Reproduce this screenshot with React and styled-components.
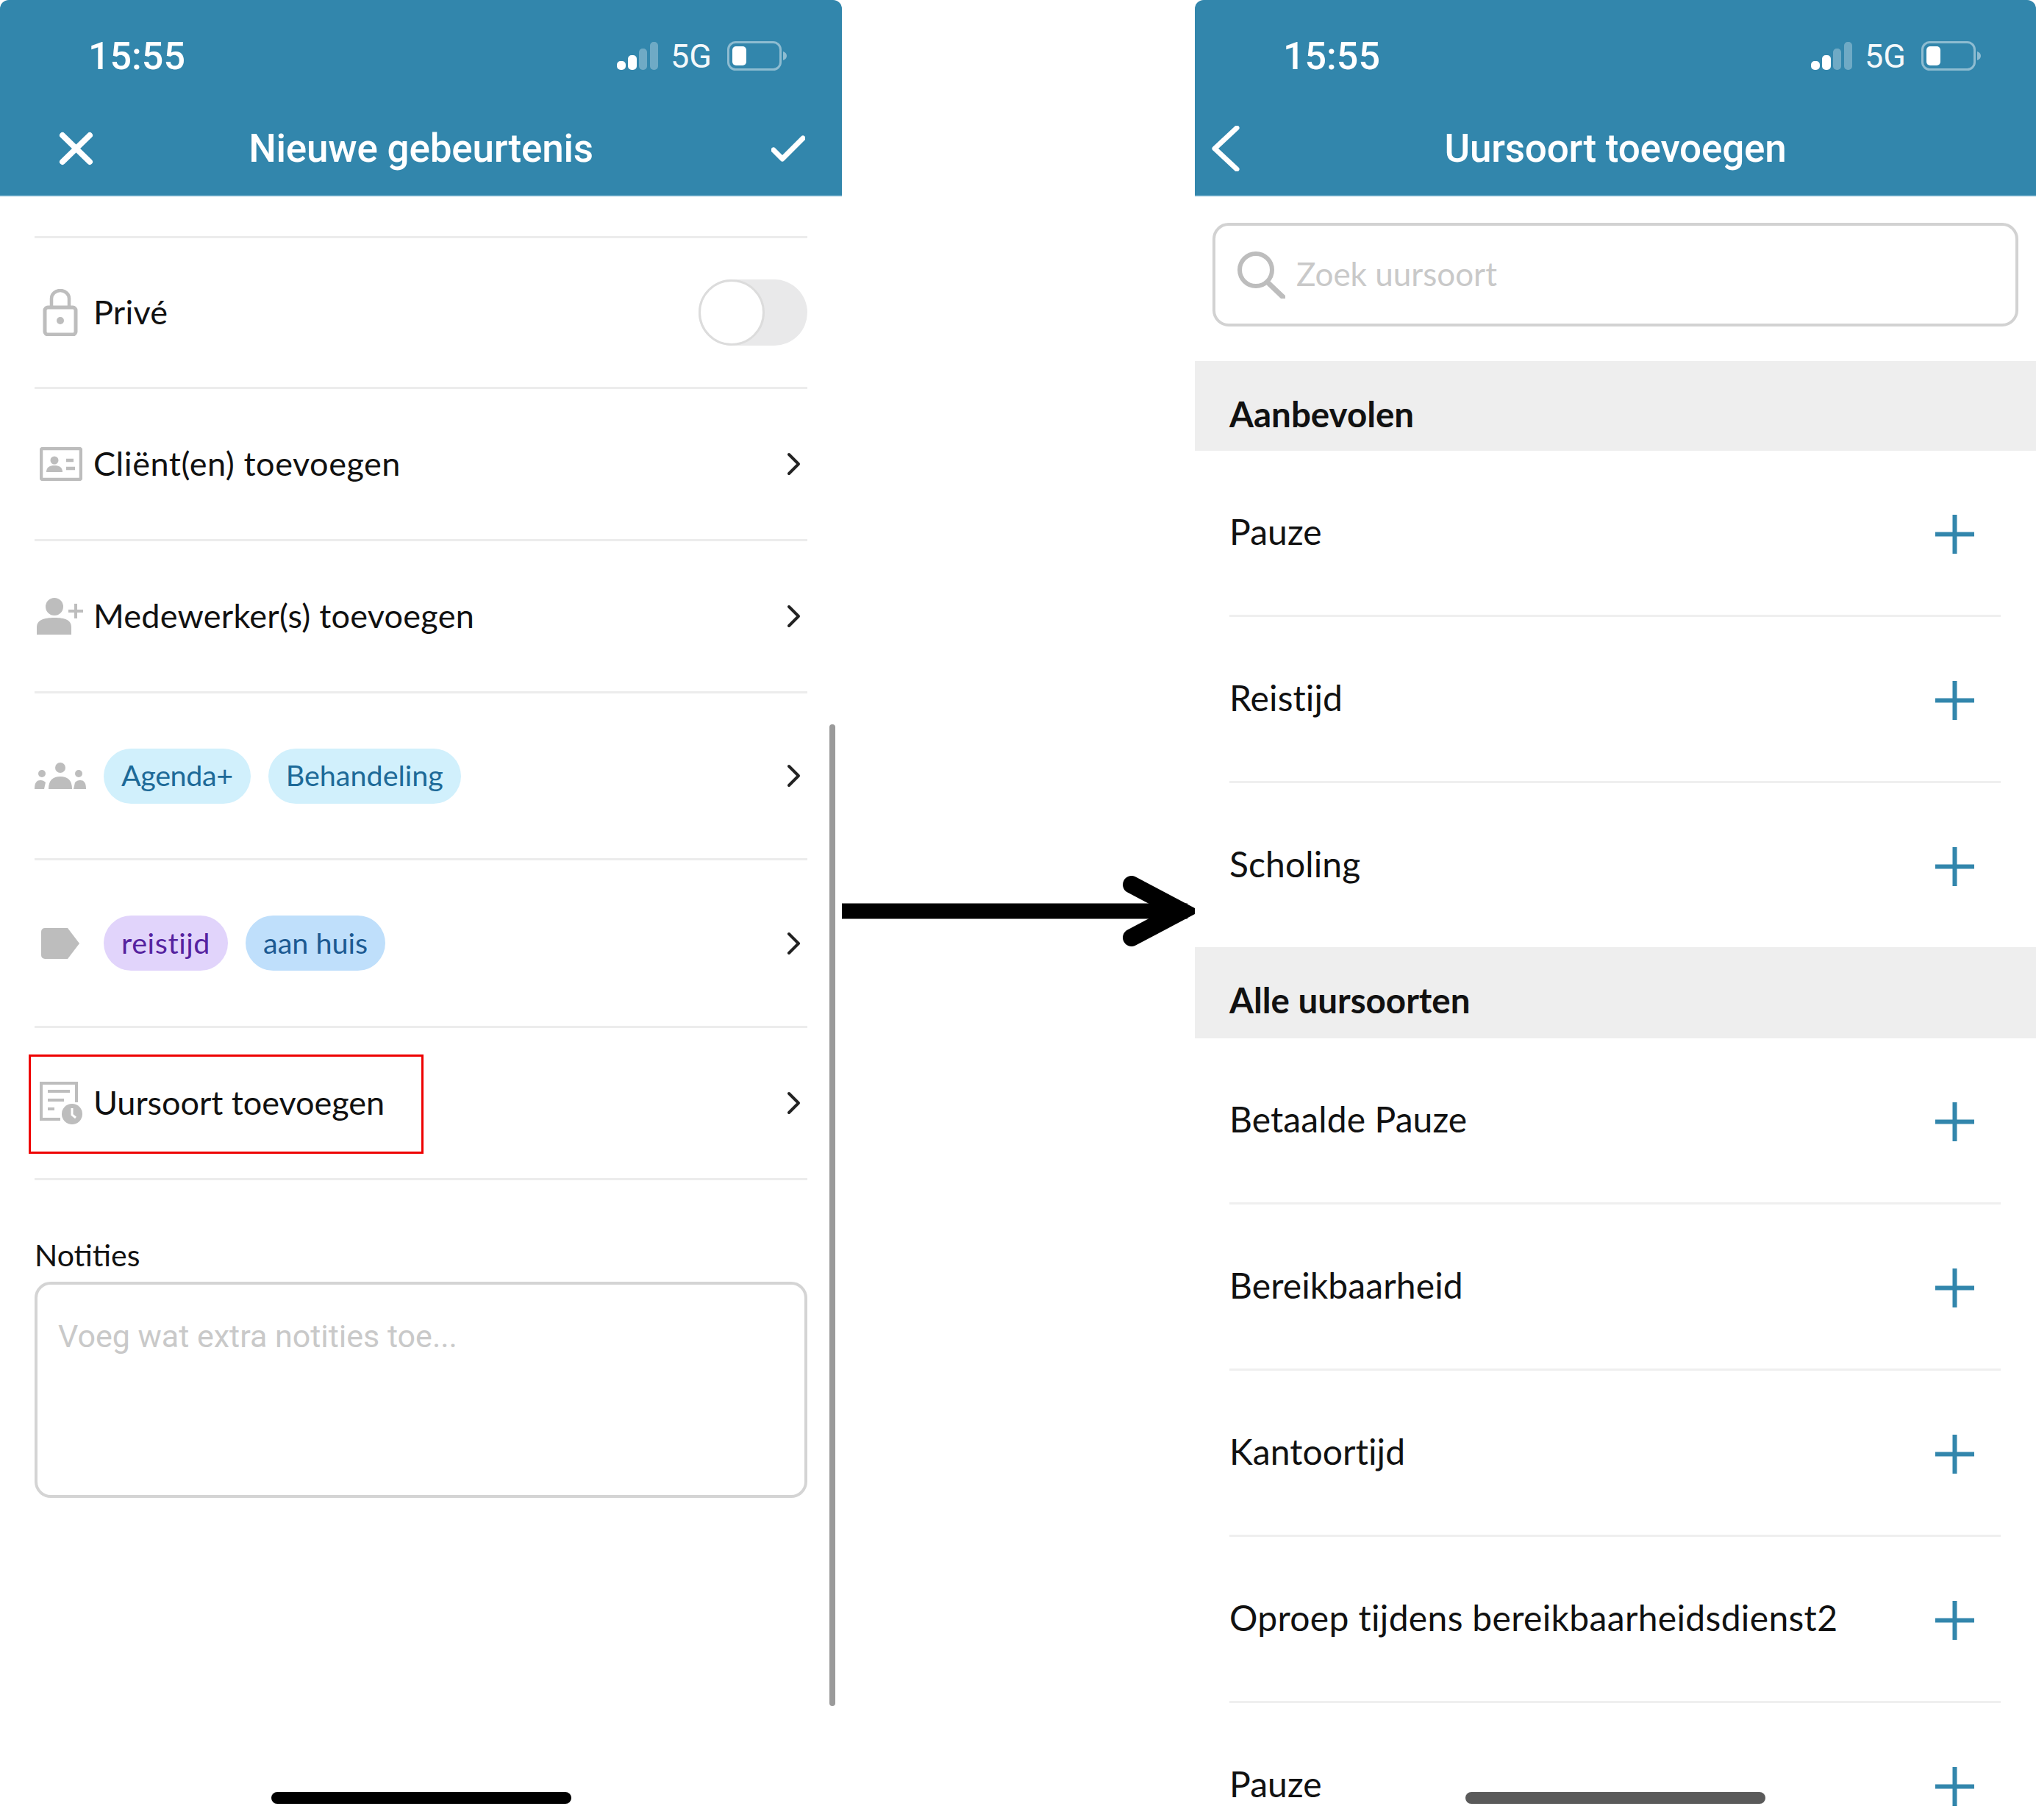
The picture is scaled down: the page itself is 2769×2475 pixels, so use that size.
import React from 'react';
import styled, { createGlobalStyle } from 'styled-components';

const BLUE = '#3286ac';
const ICON_GREY = '#bdbdbd';

const GlobalStyle = createGlobalStyle`
  html, body {
    margin: 0;
    padding: 0;
    background: #fff;
  }
  body {
    font-family: Lato, "Noto Sans", sans-serif;
  }
`;

const Page = styled.div`
  display: flex;
  width: 2769px;
  height: 2475px;
  overflow: hidden;
  background: #fff;
`;

const Phone = styled.section`
  position: relative;
  flex: none;
  width: ${(p) => p.$width}px;
  height: 2475px;
  overflow: hidden;
  background: #fff;
`;

const ArrowColumn = styled.div`
  flex: none;
  width: 480px;
  padding-top: 1191px;
  svg {
    display: block;
  }
`;

const Header = styled.header`
  background: ${BLUE};
  height: 267px;
  border-radius: 12px 12px 0 0;
  border-bottom: 2px solid #5fa3c2;
  box-sizing: border-box;
  color: #fff;
  font-family: Roboto, sans-serif;
`;

const StatusBar = styled.div`
  height: 152px;
  display: flex;
  align-items: center;
  padding: 0 75px 0 120px;
  box-sizing: border-box;
`;

const Time = styled.span`
  font-size: 52px;
  font-weight: 500;
  margin-right: auto;
`;

const Network = styled.span`
  font-size: 45px;
  margin: 0 21px 0 17px;
  opacity: 0.95;
`;

const Nav = styled.div`
  height: 113px;
  padding: 0 ${(p) => p.$side}px 13px;
  box-sizing: border-box;
  display: grid;
  grid-template-columns: 1fr auto 1fr;
  align-items: center;
  svg {
    display: block;
  }
`;

const NavTitle = styled.h1`
  margin: 0;
  font-size: 53px;
  font-weight: 500;
  letter-spacing: -0.2px;
`;

const NavStart = styled.div`
  display: flex;
  padding-left: ${(p) => p.$inset || 0}px;
`;

const NavEnd = styled.div`
  display: flex;
  justify-content: flex-end;
`;

const List = styled.div`
  margin: 54px 47px 0;
  border-top: 3px solid #ececec;
`;

const Row = styled.div`
  position: relative;
  height: ${(p) => p.$h}px;
  border-bottom: 3px solid #ececec;
  box-sizing: border-box;
  display: flex;
  align-items: center;
  padding-right: 8px;
`;

const IconSlot = styled.div`
  flex: none;
  width: ${(p) => p.$w || 80}px;
  box-sizing: border-box;
  padding-left: ${(p) => p.$inset || 0}px;
  display: flex;
  svg {
    display: block;
  }
`;

const RowLabel = styled.span`
  font-size: 45px;
  color: #111;
  letter-spacing: ${(p) => p.$track ?? 0.25}px;
  margin-bottom: 3px;
`;

const Chevron = styled.svg`
  margin-left: auto;
  flex: none;
`;

const Chip = styled.span`
  height: 75px;
  padding: 0 24px;
  border-radius: 38px;
  display: flex;
  align-items: center;
  margin-right: 24px;
  font-size: 39.5px;
  padding-bottom: 3px;
  box-sizing: border-box;
  letter-spacing: ${(p) => p.$track ?? 0}px;
  background: ${(p) => p.$bg};
  color: ${(p) => p.$fg};
`;

const RedBox = styled.div`
  position: absolute;
  left: -8px;
  top: 36px;
  width: 537px;
  height: 135px;
  border: 3px solid #ee0000;
  box-sizing: border-box;
`;

const Switch = styled.div`
  margin-left: auto;
  margin-right: -8px;
  width: 148px;
  height: 90px;
  border-radius: 45px;
  background: #e9e9ea;
  display: flex;
`;

const Knob = styled.div`
  width: 90px;
  height: 90px;
  border-radius: 50%;
  box-sizing: border-box;
  border: 3px solid #dcdcdc;
  background: #fff;
`;

const NotesBlock = styled.div`
  margin: 77px 47px 0;
`;

const NotesLabel = styled.div`
  font-size: 41px;
  color: #111;
  line-height: 50px;
  margin-bottom: 11px;
`;

const NotesBox = styled.div`
  height: 294px;
  border: 4px solid #d4d4d4;
  border-radius: 22px;
  box-sizing: border-box;
  padding: 45px 28px;
  font-family: Roboto, sans-serif;
  font-size: 43px;
  line-height: 50px;
  color: #c9c9c9;
`;

const Scrollbar = styled.div`
  position: absolute;
  left: 1128px;
  top: 985px;
  width: 8px;
  height: 1335px;
  border-radius: 4px;
  background: #9a9a9a;
`;

const HomeBar = styled.div`
  position: absolute;
  left: 50%;
  bottom: 22px;
  width: 408px;
  height: 16px;
  margin-left: -204px;
  border-radius: 8px;
  background: ${(p) => p.$color};
`;

const SearchBox = styled.div`
  margin: 36px 24px 47px;
  height: 141px;
  border: 4px solid #d2d2d2;
  border-radius: 22px;
  box-sizing: border-box;
  display: flex;
  align-items: center;
  padding-left: 29px;
  svg {
    display: block;
    flex: none;
  }
`;

const SearchText = styled.span`
  font-size: 44px;
  color: #c9c9c9;
  margin: 0 0 3px 15px;
`;

const SectionHead = styled.h2`
  margin: 0;
  height: ${(p) => p.$h}px;
  background: #eeeeee;
  box-sizing: border-box;
  padding: 46px 0 0 47px;
  font-size: 47.5px;
  line-height: 52px;
  font-weight: 700;
  color: #111;
`;

const Items = styled.div`
  margin-left: 47px;
  margin-right: 48px;
`;

const Item = styled.div`
  height: ${(p) => (p.$last ? 223 : 226)}px;
  box-sizing: border-box;
  border-bottom: ${(p) => (p.$last ? 'none' : '3px solid #efefef')};
  display: flex;
  align-items: center;
  justify-content: space-between;
  padding: 0 36px 2px 0;
`;

const ItemLabel = styled.span`
  font-size: 48px;
  color: #111;
  letter-spacing: ${(p) => p.$track ?? 0.1}px;
  margin-bottom: 3px;
`;

const PlusGlyph = styled.svg`
  margin-top: 6px;
  flex: none;
`;

const PlusIcon = () => (
  <PlusGlyph width="53" height="53" viewBox="0 0 53 53">
    <path d="M26.5 0v53M0 26.5h53" stroke={BLUE} strokeWidth="6" fill="none" />
  </PlusGlyph>
);

const ChevronRight = () => (
  <Chevron width="20" height="32" viewBox="0 0 20 32">
    <path d="M3 3l13 13L3 29" stroke="#222" strokeWidth="4" fill="none" strokeLinecap="round" strokeLinejoin="round" />
  </Chevron>
);

const Signal = () => (
  <svg width="56" height="38" viewBox="0 0 56 38">
    <rect x="0" y="26" width="12" height="12" rx="5" fill="#fff" />
    <rect x="15" y="18" width="12" height="20" rx="5" fill="#fff" />
    <rect x="30" y="9" width="11" height="29" rx="5" fill="#fff" opacity="0.3" />
    <rect x="45" y="0" width="11" height="38" rx="5" fill="#fff" opacity="0.3" />
  </svg>
);

const Battery = () => (
  <svg width="81" height="40" viewBox="0 0 81 40">
    <rect x="1.5" y="1.5" width="71" height="37" rx="10" fill="none" stroke="#fff" strokeOpacity="0.45" strokeWidth="3" />
    <rect x="7" y="7" width="19" height="26" rx="5" fill="#fff" />
    <path d="M76 14c3 1 5 3 5 6s-2 5-5 6z" fill="#fff" opacity="0.45" />
  </svg>
);

const Status = () => (
  <StatusBar>
    <Time>15:55</Time>
    <Signal />
    <Network>5G</Network>
    <Battery />
  </StatusBar>
);

const LockIcon = () => (
  <svg width="48" height="64" viewBox="0 0 48 64">
    <rect x="3" y="25" width="42" height="37" rx="4" fill="none" stroke={ICON_GREY} strokeWidth="5" />
    <path d="M12 25V13a12 11 0 0 1 24 0v12" fill="none" stroke={ICON_GREY} strokeWidth="4.5" />
    <circle cx="24" cy="43" r="5" fill={ICON_GREY} />
  </svg>
);

const CardIcon = () => (
  <svg width="58" height="46" viewBox="0 0 58 46">
    <rect x="2" y="2" width="54" height="42" rx="2" fill="none" stroke={ICON_GREY} strokeWidth="4.5" />
    <circle cx="20" cy="18" r="5.5" fill={ICON_GREY} />
    <path d="M9 34c0-7 5-9 11-9s11 2 11 9z" fill={ICON_GREY} />
    <path d="M36 18h10M36 29h12" stroke={ICON_GREY} strokeWidth="4.5" />
  </svg>
);

const PersonPlusIcon = () => (
  <svg width="64" height="50" viewBox="0 0 64 50">
    <circle cx="24" cy="12" r="12" fill={ICON_GREY} />
    <path d="M0 50V40c0-10 10-13 24-13s23 3 23 13v10z" fill={ICON_GREY} />
    <path d="M53 8v20M43 18h20" stroke={ICON_GREY} strokeWidth="4" fill="none" />
  </svg>
);

const GroupIcon = () => (
  <svg width="70" height="36" viewBox="0 0 70 36">
    <circle cx="35" cy="7" r="7" fill={ICON_GREY} />
    <path d="M19 36c0-12 6-17 16-17s16 5 16 17z" fill={ICON_GREY} />
    <circle cx="10" cy="15" r="5" fill={ICON_GREY} />
    <path d="M0 36c0-9 3-12 8-12 3 0 5 1 7 3l-2 9z" fill={ICON_GREY} />
    <circle cx="60" cy="15" r="5" fill={ICON_GREY} />
    <path d="M70 36c0-9-3-12-8-12-3 0-5 1-7 3l-2 9z" fill={ICON_GREY} />
  </svg>
);

const TagIcon = () => (
  <svg width="52" height="42" viewBox="0 0 52 42">
    <path d="M5 0h31l16 21-16 21H5a5 5 0 0 1-5-5V5a5 5 0 0 1 5-5z" fill={ICON_GREY} />
  </svg>
);

const HoursIcon = () => (
  <svg width="58" height="58" viewBox="0 0 58 58">
    <path d="M28 51H2V2h48v26" fill="none" stroke={ICON_GREY} strokeWidth="4" />
    <path d="M11 13h30M11 25h22M11 37h9" stroke={ICON_GREY} strokeWidth="4" fill="none" />
    <circle cx="44" cy="44" r="14" fill={ICON_GREY} />
    <path d="M44 36v9l5 4" stroke="#fff" strokeWidth="3" fill="none" />
  </svg>
);

const recommended = ['Pauze', 'Reistijd', 'Scholing'];
const allTypes = ['Betaalde Pauze', 'Bereikbaarheid', 'Kantoortijd', 'Oproep tijdens bereikbaarheidsdienst2', 'Pauze'];

export default function App() {
  return (
    <>
      <GlobalStyle />
      <Page>
        <Phone $width={1145}>
          <Header>
            <Status />
            <Nav $side={50}>
              <NavStart $inset={30}>
                <svg width="47" height="46" viewBox="0 0 47 46">
                  <path d="M5 5l37 36M42 5L5 41" stroke="#fff" strokeWidth="8" strokeLinecap="round" fill="none" />
                </svg>
              </NavStart>
              <NavTitle>Nieuwe gebeurtenis</NavTitle>
              <NavEnd>
                <svg width="46" height="36" viewBox="0 0 46 36">
                  <path d="M3 20l12 12L43 4" stroke="#fff" strokeWidth="7" strokeLinecap="round" strokeLinejoin="round" fill="none" />
                </svg>
              </NavEnd>
            </Nav>
          </Header>
          <List>
            <Row $h={205}>
              <IconSlot $inset={11}><LockIcon /></IconSlot>
              <RowLabel>Privé</RowLabel>
              <Switch><Knob /></Switch>
            </Row>
            <Row $h={207}>
              <IconSlot $inset={7}><CardIcon /></IconSlot>
              <RowLabel $track={0.55}>Cliënt(en) toevoegen</RowLabel>
              <ChevronRight />
            </Row>
            <Row $h={207}>
              <IconSlot $inset={3}><PersonPlusIcon /></IconSlot>
              <RowLabel>Medewerker(s) toevoegen</RowLabel>
              <ChevronRight />
            </Row>
            <Row $h={227}>
              <IconSlot $w={94}><GroupIcon /></IconSlot>
              <Chip $bg="#d1f0fc" $fg="#1d6a98" $track={-0.4}>Agenda+</Chip>
              <Chip $bg="#d1f0fc" $fg="#1d6a98">Behandeling</Chip>
              <ChevronRight />
            </Row>
            <Row $h={228}>
              <IconSlot $w={94} $inset={9}><TagIcon /></IconSlot>
              <Chip $bg="#e1d4fb" $fg="#55229f" $track={0.6}>reistijd</Chip>
              <Chip $bg="#bfdffb" $fg="#1c5a92">aan huis</Chip>
              <ChevronRight />
            </Row>
            <Row $h={207}>
              <IconSlot $inset={7}><HoursIcon /></IconSlot>
              <RowLabel $track={-0.05}>Uursoort toevoegen</RowLabel>
              <ChevronRight />
              <RedBox />
            </Row>
          </List>
          <NotesBlock>
            <NotesLabel>Notities</NotesLabel>
            <NotesBox>Voeg wat extra notities toe...</NotesBox>
          </NotesBlock>
          <Scrollbar />
          <HomeBar $color="#000" />
        </Phone>

        <ArrowColumn>
          <svg width="480" height="96" viewBox="0 0 480 96">
            <path d="M0 48h470" stroke="#000" strokeWidth="21" fill="none" />
            <path d="M394 12l68 36-68 36" stroke="#000" strokeWidth="24" strokeLinecap="round" strokeLinejoin="miter" fill="none" />
          </svg>
        </ArrowColumn>

        <Phone $width={1144}>
          <Header>
            <Status />
            <Nav $side={23}>
              <svg width="38" height="62" viewBox="0 0 38 62">
                <path d="M34 3L4 31l30 28" stroke="#fff" strokeWidth="7" strokeLinecap="round" strokeLinejoin="round" fill="none" />
              </svg>
              <NavTitle>Uursoort toevoegen</NavTitle>
              <NavEnd />
            </Nav>
          </Header>
          <SearchBox>
            <svg width="66" height="64" viewBox="0 0 66 64">
              <circle cx="26" cy="25" r="22" fill="none" stroke="#bdbdbd" strokeWidth="6" />
              <path d="M42 42l21 20" stroke="#bdbdbd" strokeWidth="7" strokeLinecap="round" />
            </svg>
            <SearchText>Zoek uursoort</SearchText>
          </SearchBox>
          <SectionHead $h={122}>Aanbevolen</SectionHead>
          <Items>
            {recommended.map((name, i) => (
              <Item key={name} $last={i === recommended.length - 1}>
                <ItemLabel>{name}</ItemLabel>
                <PlusIcon />
              </Item>
            ))}
          </Items>
          <SectionHead $h={124}>Alle uursoorten</SectionHead>
          <Items>
            {allTypes.map((name, i) => (
              <Item key={name + i}>
                <ItemLabel $track={name.length > 20 ? 0.33 : undefined}>{name}</ItemLabel>
                <PlusIcon />
              </Item>
            ))}
          </Items>
          <HomeBar $color="#5a5a5a" />
        </Phone>
      </Page>
    </>
  );
}
